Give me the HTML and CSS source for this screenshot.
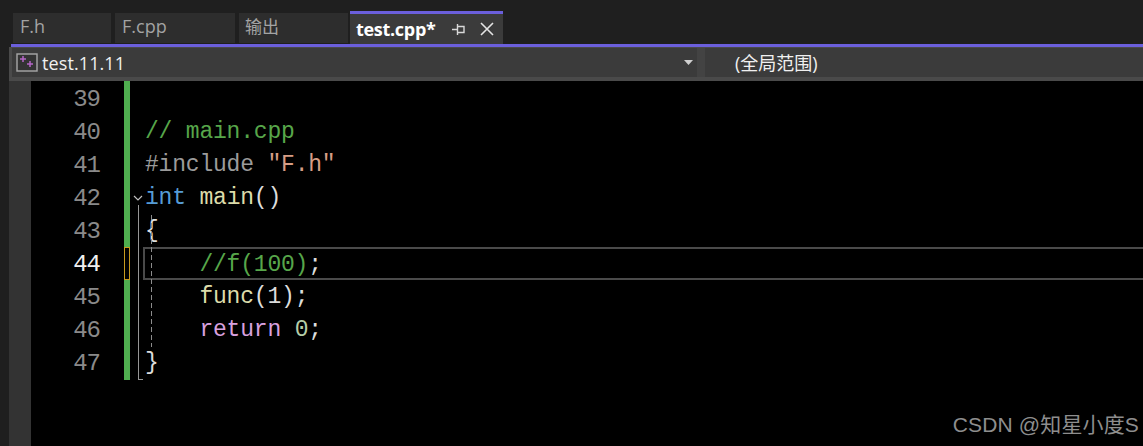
FILE: index.html
```html
<!DOCTYPE html>
<html lang="zh">
<head>
<meta charset="utf-8">
<title>test.cpp</title>
<link rel="stylesheet" href="styles.css">
</head>
<body>
<div class="tabstrip">
  <div class="tab tab-fh">F.h</div>
  <div class="tab tab-fcpp">F.cpp</div>
  <div class="tab tab-out">输出</div>
  <div class="tab-active">
    <span class="tab-title">test.cpp*</span>
    <svg class="pin" width="14" height="14" viewBox="0 0 14 14"><path d="M0 7.500h5M5.500 2v11M5.500 4.500h6.500v6H5.500" fill="none" stroke="#d8d8d8" stroke-width="1.400"/></svg>
    <svg class="close" width="14" height="14" viewBox="0 0 14 14"><path d="M1 1l12 12M13 1L1 13" fill="none" stroke="#e4e4e4" stroke-width="1.6"/></svg>
  </div>
</div>
<div class="accent"></div>
<div class="nav">
  <div class="nav-left">
    <svg class="proj" width="22" height="19" viewBox="0 0 22 19"><rect x="1" y="1" width="20" height="17" fill="#333" stroke="#a8a8a8" stroke-width="1.4"/><path d="M7 3v6M4 6h6M14 8v6M11 11h6" stroke="#b565c8" stroke-width="1.5" fill="none"/></svg>
    <span class="nav-name">test.11.11</span>
    <svg class="caret" width="9" height="5" viewBox="0 0 9 5"><path d="M0 0h9L4.500 5z" fill="#d0d0d0"/></svg>
  </div>
  <div class="nav-sep"></div>
  <div class="nav-right">(全局范围)</div>
</div>
<div class="editor">
  <div class="rail"></div>
  <div class="numbers">
    <div class="num">39</div>
    <div class="num">40</div>
    <div class="num">41</div>
    <div class="num">42</div>
    <div class="num">43</div>
    <div class="num num-cur">44</div>
    <div class="num">45</div>
    <div class="num">46</div>
    <div class="num">47</div>
  </div>
  <div class="changebar"><div class="marker"></div></div>
  <div class="code">
    <div class="fold">
      <svg class="chevron" width="10" height="6" viewBox="0 0 10 6"><path d="M1 1l4 4 4-4" fill="none" stroke="#c0c0c0" stroke-width="1.200"/></svg>
      <div class="fold-line"></div>
    </div>
    <div class="guide"></div>
    <div class="line">&nbsp;</div>
    <div class="line"><span class="c-com">// main.cpp</span></div>
    <div class="line"><span class="c-pre">#include </span><span class="c-str">"F.h"</span></div>
    <div class="line"><span class="c-kw">int</span> <span class="c-fn">main</span><span class="c-p">()</span></div>
    <div class="line"><span class="c-kw2">{</span></div>
    <div class="line line-cur"><span class="c-com">    //f(100)</span><span class="c-p">;</span></div>
    <div class="line"><span class="c-fn">    func</span><span class="c-p">(1);</span></div>
    <div class="line"><span class="c-ret">    return</span> <span class="c-nm">0</span><span class="c-p">;</span></div>
    <div class="line"><span class="c-p">}</span></div>
  </div>
  <div class="watermark">CSDN @知星小度S</div>
</div>
</body>
</html>
```

FILE: styles.css
```css
* { box-sizing: border-box; }
html, body { margin: 0; height: 446px; overflow: hidden; }
body { background: #1f1f1f; font-family: "Open Sans", "Noto Sans CJK SC", sans-serif; display: flex; flex-direction: column; }

.tabstrip { height: 44px; padding-left: 13px; display: flex; align-items: flex-start; padding-top: 11px; }
.tab { height: 30px; margin-top: 2px; background: #2d2d2d; color: #a3a3a3; font-size: 18px; line-height: 27px; padding-left: 7px; margin-right: 4px; }
.tab-fh { width: 98px; }
.tab-fcpp { width: 120px; }
.tab-out { width: 109px; margin-right: 2px; padding-left: 6px; font-size: 17px; }
.tab-active { width: 153px; height: 33px; background: #3b3b3b; border-top: 3px solid #6b5fdc; display: flex; align-items: center; padding-left: 6px; color: #fff; }
.tab-title { font-size: 18px; font-weight: 700; width: 96px; line-height: 24px; letter-spacing: -0.3px; }
.pin { margin-right: 14px; }

.accent { height: 3px; margin-left: 11px; background: #6b5fdc; }

.nav { height: 34px; margin-left: 9px; padding: 1px 0 4px 3px; background: #4a4a4a; display: flex; }
.nav-left { width: 685px; background: #3b3b3b; display: flex; align-items: center; padding-left: 4px; position: relative; }
.proj { flex: none; }
.nav-name { margin-left: 4px; color: #f0f0f0; font-size: 18px; letter-spacing: 0.1px; }
.caret { margin-left: auto; margin-right: 4px; }
.nav-sep { width: 8px; background: #434343; }
.nav-right { flex: 1; background: #3b3b3b; color: #f0f0f0; font-size: 18px; line-height: 30px; padding-left: 30px; font-family: "Open Sans", "Noto Sans CJK SC", sans-serif; }

.editor { flex: 1; margin-left: 9px; display: flex; background: #000; position: relative; font-family: "Liberation Mono", "DejaVu Sans Mono", monospace; }
.rail { width: 22px; background: #333; flex: none; }
.numbers { width: 69px; flex: none; text-align: right; }
.num { height: 33px; line-height: 37px; font-size: 24px; color: #8a8a8a; letter-spacing: -1px; }
.num-cur { color: #f0f0f0; }
.changebar { width: 6px; height: 299px; margin-left: 24px; flex: none; background: #4fae4f; position: relative; }
.marker { position: absolute; left: 0; top: 166px; width: 6px; height: 33px; background: #000; border: 1px solid #c79a1f; }
.code { flex: 1; padding-left: 14px; position: relative; }
.fold { position: absolute; left: 3px; top: 0; width: 12px; height: 299px; }
.chevron { position: absolute; left: 0; top: 114px; }
.fold-line { position: absolute; left: 5px; top: 124px; width: 5px; height: 175px; border-left: 1px solid #969696; border-bottom: 1px solid #969696; }
.guide { position: absolute; left: 21px; top: 134px; width: 1px; height: 132px; background: repeating-linear-gradient(to bottom, #8c8c8c 0 5px, transparent 5px 8px); }
.line { height: 33px; line-height: 37px; font-size: 23px; letter-spacing: -0.2px; white-space: pre; color: #dcdcdc; padding-left: 1px; }
.line-cur { border: 2px solid #4a4a4a; border-right: 0; height: 33px; line-height: 33px; margin: 1px 0 -1px -1px; padding-left: 0; }
.c-com { color: #57a64a; }
.c-pre { color: #9b9b9b; }
.c-str { color: #d69d85; }
.c-kw { color: #569cd6; }
.c-kw2 { color: #dcdcdc; }
.c-fn { color: #dcdcaa; }
.c-p { color: #dcdcdc; }
.c-ret { color: #d8a0df; }
.c-nm { color: #b5cea8; }

.watermark { position: absolute; right: 4px; top: 329px; color: #8e8e8e; font-family: "Liberation Sans", "Noto Sans CJK SC", sans-serif; font-size: 21px; line-height: 30px; letter-spacing: 0.15px; }
```
